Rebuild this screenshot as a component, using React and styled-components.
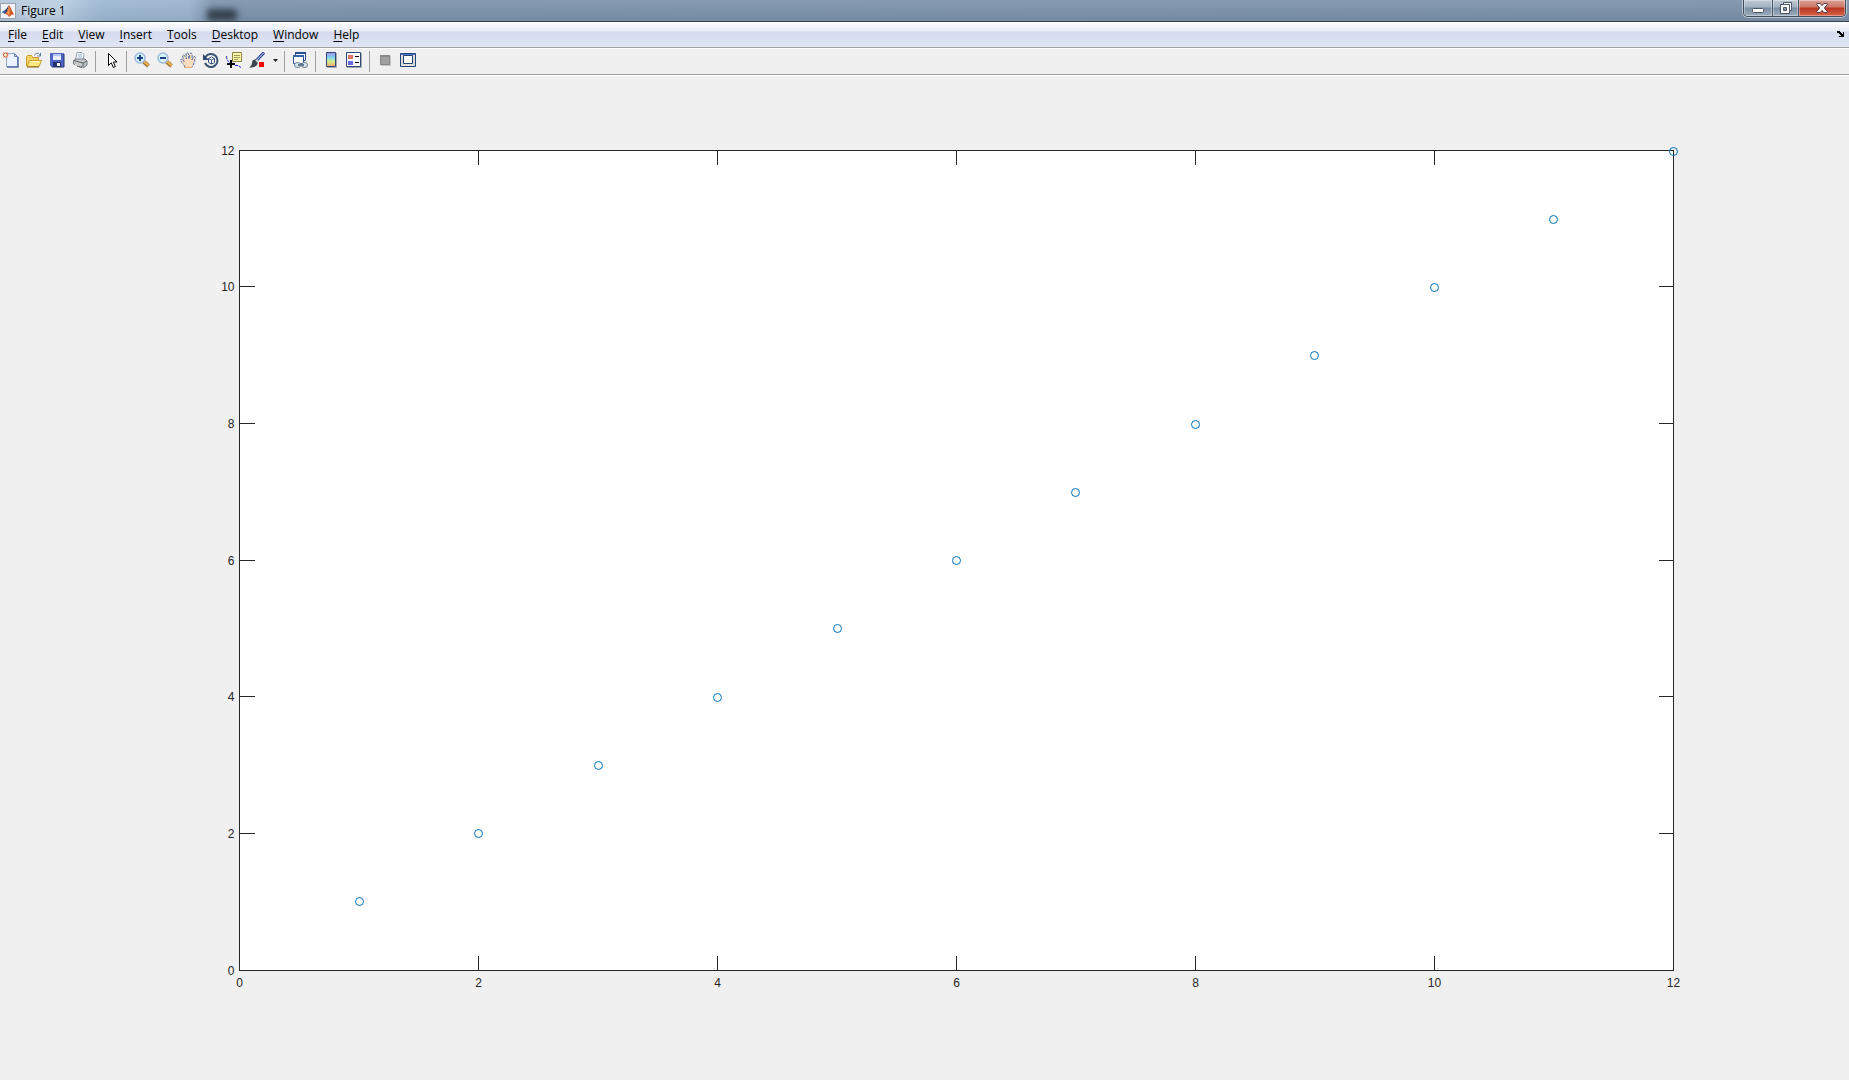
import React, { useLayoutEffect, useRef, useState } from "react";
import styled, { createGlobalStyle } from "styled-components";

const menus = ["File", "Edit", "View", "Insert", "Tools", "Desktop", "Window", "Help"];
const ticks = [0, 2, 4, 6, 8, 10, 12];
const points = [1, 2, 3, 4, 5, 6, 7, 8, 9, 10, 11, 12];
const MAX = 12;

export default function App(){
    return(
        <Page>
            <GlobalStyle />
            <TitleBar>
                <MatlabIcon />
                <Title>Figure 1</Title>
                <Smudge />
                <WindowControls />
            </TitleBar>
            <MenuBar>
                {menus.map(name => (
                    <MenuItem key={name}><u>{name[0]}</u>{name.substring(1)}</MenuItem>
                ))}
                <DockButton aria-label="Dock figure">
                    <svg width="8" height="7" viewBox="0 0 8 7" shapeRendering="crispEdges">
                        <path d="M0 0h3v1h1v1h1v1h1V1h1v5H2V5h2V4H3V3H2V2H0z" fill="#000" />
                    </svg>
                </DockButton>
            </MenuBar>
            <ToolBar>
                <Tool label="New Figure"><NewIcon /></Tool>
                <Tool label="Open File"><OpenIcon /></Tool>
                <Tool label="Save Figure"><SaveIcon /></Tool>
                <Tool label="Print Figure"><PrintIcon /></Tool>
                <Separator />
                <Tool label="Edit Plot"><PointerIcon /></Tool>
                <Separator />
                <Tool label="Zoom In"><ZoomIcon plus /></Tool>
                <Tool label="Zoom Out"><ZoomIcon /></Tool>
                <Tool label="Pan"><HandIcon /></Tool>
                <Tool label="Rotate 3D"><RotateIcon /></Tool>
                <Tool label="Data Cursor"><DataCursorIcon /></Tool>
                <Tool label="Brush"><BrushIcon /></Tool>
                <CaretButton aria-label="Brush colour">
                    <svg width="5" height="3" viewBox="0 0 5 3"><path d="M0 0h5L2.5 3z" fill="#222" /></svg>
                </CaretButton>
                <Separator />
                <Tool label="Link Plot"><LinkIcon /></Tool>
                <Separator />
                <Tool label="Insert Colorbar"><ColorbarIcon /></Tool>
                <Tool label="Insert Legend"><LegendIcon /></Tool>
                <Separator />
                <Tool label="Hide Plot Tools"><HideIcon /></Tool>
                <Tool label="Show Plot Tools"><ShowIcon /></Tool>
            </ToolBar>
            <Chart />
        </Page>
    );
}

function Tool(props){
    return(
        <ToolButton aria-label={props.label}>
            <Icon viewBox="0 0 16 16">{props.children}</Icon>
        </ToolButton>
    );
}

function Chart(){
    const ref = useRef(null);
    const [size, setSize] = useState({ width: 0, height: 0 });

    useLayoutEffect(() => {
        const measure = () => setSize({
            width: ref.current.clientWidth,
            height: ref.current.clientHeight
        });
        measure();
        window.addEventListener("resize", measure);
        return () => window.removeEventListener("resize", measure);
    }, []);

    // default axes position: 13% / 11% margins, 77.5% x 81.5% of the figure
    const left = Math.floor(size.width * 0.13) - 1;
    const top = Math.floor(size.height * 0.075);
    const w = Math.floor(size.width * 0.775) + 2;
    const h = Math.floor(size.height * 0.815) + 1;
    const x = v => Math.round(left + w * v / MAX) + 0.5;
    const y = v => Math.floor(top + h - h * v / MAX) + 0.5;
    // markers are placed inside the top left border
    const markerX = v => Math.floor(left + 1 + (w - 1) * v / MAX) + 0.5;
    const markerY = v => Math.floor(top + h - (h - 1) * v / MAX) + 0.5;
    const len = 15;

    return(
        <Figure ref={ref}>
            {size.width > 0 && (
                <Plot role="img" aria-label="Scatter plot">
                    <rect x={x(0)} y={y(MAX)} width={w} height={h} fill="#fff" stroke="#262626" />
                    {ticks.map(t => (
                        <g key={t}>
                            <Tick
                                d={`M${x(t)} ${y(0)}v${-len}M${x(t)} ${y(MAX)}v${len - 1}M${x(0)} ${y(t)}h${len}M${x(MAX)} ${y(t)}h${-len}`}
                            />
                            <Label x={x(t)} y={y(0) + 16} textAnchor="middle">{t}</Label>
                            <Label x={x(0) - 5} y={y(t) + 4} textAnchor="end">{t}</Label>
                        </g>
                    ))}
                    {points.map(p => (
                        <Marker key={p} cx={markerX(p)} cy={markerY(p)} r="4" />
                    ))}
                </Plot>
            )}
        </Figure>
    );
}

function WindowControls(){
    return(
        <Controls>
            <ControlButton $width="28px" aria-label="Minimize">
                <svg width="12" height="16" viewBox="0 0 12 16">
                    <rect x=".5" y="8.5" width="11" height="4" rx="1" fill="#fff" stroke="#4c5468" />
                </svg>
            </ControlButton>
            <ControlButton $width="26px" aria-label="Restore">
                <svg width="12" height="16" viewBox="0 0 12 16">
                    <path d="M3.5 2.5h8v8h-8z" fill="#fff" stroke="#4c5468" />
                    <path d="M.5 4.5h9v9h-9z" fill="#fff" stroke="#4c5468" />
                    <path d="M3.5 7.5h3v3h-3z" fill="#8595a8" stroke="#4c5468" />
                </svg>
            </ControlButton>
            <ControlButton $width="47px" $close aria-label="Close">
                <svg width="12" height="16" viewBox="0 0 12 16">
                    <path d="M.8 3.5h3.4L6 5.7l1.8-2.2h3.4v1.200L8.3 8l2.9 3.3v1.2H7.8L6 10.3l-1.8 2.2H.8v-1.200L3.7 8 .8 4.7z" fill="#fff" stroke="#54404a" />
                </svg>
            </ControlButton>
        </Controls>
    );
}

function MatlabIcon(){
    return(
        <svg width="16" height="16" viewBox="0 0 16 16">
            <rect x=".5" y=".5" width="15" height="15" fill="#f2f4f7" stroke="#9aa3ad" />
            <path d="M1.5 9l3.5-2 2 1-2.5 3z" fill="#4a78b8" />
            <path d="M5 7c2-1 2.5-3.5 4-5l-2 7-2.5 2z" fill="#28456e" />
            <path d="M9 2c1.5 1.5 3 7 5.5 9.5-2-1-3 .5-5.5 2.5-1-2-2-3-4-3 2.5-2 3-6 4-9z" fill="#d6532a" />
            <path d="M9 3c1 3 .5 7 .5 10-.8-1.500-1.500-2.500-3-3C8.500 8 8.600 5 9 3z" fill="#f0a050" />
        </svg>
    );
}

const NewIcon = () => (
    <>
        <path d="M3.5 1.5h8l3 3v10h-11z" fill="#eaf2fd" stroke="#8fa6d0" />
        <path d="M11.5 1.5v3h3z" fill="#b9cdf0" stroke="#6681b5" />
        <path d="M15 5v10H4" fill="none" stroke="#4f6ca5" strokeWidth="1.5" />
        <path d="M0 0l5 6M5 0L0 6M0 3h6" stroke="#f1b08c" />
        <circle cx="2.5" cy="3" r="2" fill="#fff0d8" stroke="#d4552c" />
    </>
);

const OpenIcon = () => (
    <>
        <path d="M8.5 3.5c1-3 4-3 5.500-.5M14.5 1v3h-3" fill="none" stroke="#657c9c" />
        <path d="M.5 14V4.5l1-1h4l1 2h6v3" fill="#f4d263" stroke="#c99a2d" />
        <path d="M1 14.5L3.5 8.5h12l-2.500 6z" fill="#fce97d" stroke="#c99a2d" />
        <path d="M4 9.5h10" stroke="#fffad0" />
        <path d="M1 15h12" stroke="#8b671b" />
    </>
);

const SaveIcon = () => (
    <>
        <path d="M1.5 1.5h13v13h-12l-1-1z" fill="#4e62c8" stroke="#5366bb" />
        <path d="M15 2v13H3" fill="none" stroke="#27306e" />
        <path d="M4 2h8v6H4z" fill="#e6efff" />
        <path d="M4 2h8v2H4z" fill="#b1c8f4" />
        <path d="M4 10h8v5H4z" fill="#26306f" />
        <path d="M8 11h3v3H8z" fill="#fff" />
    </>
);

const PrintIcon = () => (
    <>
        <path d="M3.5 8l1.500-7.500h5l2 2-1 6z" fill="#f7fbff" stroke="#91a2b8" />
        <path d="M6 3h4M6 5h4" stroke="#9db2cc" />
        <path d="M1.5 8.5L4 7h9l2 2v4l-3 2.500L1.5 12z" fill="#c4c7ca" stroke="#777c83" />
        <path d="M1.5 8.5L11 11l4-2M11 11v4" fill="none" stroke="#62676e" />
        <path d="M3 12.5l6 2" stroke="#f4f4f4" />
        <path d="M5 14l5 1.5" stroke="#4f545a" />
        <path d="M12 12h1" stroke="#4eb045" />
    </>
);

const PointerIcon = () => (
    <path d="M5.5 1.5v12l2.800-2.700 2 4.700 2-1-2-4.500h3.700z" fill="#fff" stroke="#000" />
);

const ZoomIcon = props => (
    <>
        <path d="M9.5 9.5l5 4.500" stroke="#9a713e" strokeWidth="4" />
        <path d="M9.5 9l5 4.500" stroke="#f3b34b" strokeWidth="2" />
        <circle cx="6" cy="6" r="5" fill="#d6f3fc" stroke="#9db9dc" strokeWidth="1.5" />
        <path d={props.plus ? "M3 6h6M6 3v6" : "M3 6h6"} stroke="#193f7d" strokeWidth="2" />
    </>
);

const handOutline = "M5 15c-.5-2-4-4.5-4.5-7C1 6.5 2.5 7.5 4 9.5L2.5 4c.5-1.8 2-1.2 2.5.5L6.5 7 6 2c.5-1.8 2-1.5 2.5 0L9 7l1-5c.7-1.6 2.4-1 2.2.8L12 8l1.5-3c1-1.2 2.2-.3 1.8 1C14.5 9 14 12 12 15";

const HandIcon = () => (
    <>
        <path d={handOutline} fill="#fbdcbd" stroke="#4d6da6" strokeDasharray="3 1" />
        <path d="M4 15.5h8" stroke="#e0b48a" />
    </>
);

const RotateIcon = () => (
    <>
        <path d="M2.5 5A6.5 6.5 0 1 1 2 11" fill="none" stroke="#3a5278" strokeWidth="2" />
        <path d="M0 2v6h6z" fill="#2f4870" />
        <path d="M5.5 6.5l3-1.5 3 1.5v4l-3 1.5-3-1.5z" fill="#fff" stroke="#3a5680" />
        <path d="M5.5 6.5l3 1.5 3-1.5M8.5 8v4" fill="none" stroke="#3a5680" />
    </>
);

const DataCursorIcon = () => (
    <>
        <path d="M6.5.5h9v9h-9z" fill="#fbf7a9" stroke="#8b8446" />
        <path d="M8 3.5h6M8 5.5h6M8 7.5h4" stroke="#9e9859" />
        <path d="M.5 4c0 4 2 6 4 7M9 13.5h3l3 2" fill="none" stroke="#2323ed" strokeDasharray="3 1" />
        <path d="M1 12h8M5 8v8" stroke="#000" strokeWidth="2" />
    </>
);

const BrushIcon = () => (
    <>
        <path d="M7 9l8-8.5" stroke="#344a97" strokeWidth="3" />
        <path d="M8 8l6.5-7" stroke="#bacdf5" />
        <path d="M7.5 7.5C4 7 3 9 3 11c0 1.5-1 3-3 4.5 5 0 9-1 9-6z" fill="#3e444b" />
        <path d="M7 8l2 2" stroke="#c9ccd0" strokeWidth="2" />
        <path d="M10 10h5v5h-5z" fill="#f00" />
    </>
);

const LinkIcon = () => (
    <>
        <path d="M3.5.5h10v8h-10z" fill="#fff" stroke="#2c4f8f" />
        <path d="M3 1h11" stroke="#2c4f8f" strokeWidth="2" />
        <path d="M1.5 3.5h10v8h-10z" fill="#fff" stroke="#2c4f8f" />
        <path d="M1 4h11" stroke="#3762a9" strokeWidth="2" />
        <g fill="#d8e5ea" stroke="#6c8394">
            <rect x="2.5" y="10.5" width="6" height="5" rx="2.5" />
            <rect x="9.5" y="10.5" width="6" height="5" rx="2.5" />
        </g>
        <path d="M6 13h6" stroke="#60788a" strokeWidth="2" />
    </>
);

const ColorbarIcon = () => (
    <>
        <defs>
            <linearGradient id="bar" x2="0" y2="1">
                <stop stopColor="#aa91e7" />
                <stop offset=".35" stopColor="#79d5f2" />
                <stop offset=".65" stopColor="#d8ed8b" />
                <stop offset="1" stopColor="#f5a16f" />
            </linearGradient>
        </defs>
        <path d="M4 15.5h9.5V1" fill="none" stroke="#a7a9ae" />
        <path d="M3.5.5h9v14h-9z" fill="url(#bar)" stroke="#2d4878" />
    </>
);

const LegendIcon = () => (
    <>
        <path d="M1 15.5h14.5V1" fill="none" stroke="#a7a9ae" />
        <path d="M.5.5h14v14H.5z" fill="#fff" stroke="#2d4878" />
        <path d="M2 3h5v4H2z" fill="#df7169" />
        <path d="M2 9h5v4H2z" fill="#6b67dc" />
        <path d="M9 4.5h4M9 10.5h4" stroke="#000" />
    </>
);

const HideIcon = () => (
    <>
        <path d="M3 3h10v10H3z" fill="#888" />
        <path d="M4 5h8v7H4z" fill="#a0a0a0" />
        <path d="M4 13.5h9.5V4" fill="none" stroke="#c5c5c5" />
    </>
);

const ShowIcon = () => (
    <>
        <path d="M.5 1.5h15v13H.5z" fill="#d9d9d4" stroke="#24467f" />
        <path d="M1 2.5h14" stroke="#4a78c4" />
        <path d="M3.5 3.5h9v8h-9z" fill="#fff" stroke="#24467f" />
        <path d="M2 13h12" stroke="#fff" strokeDasharray="1 1" />
    </>
);

const GlobalStyle = createGlobalStyle`
    body{
        margin: 0;
        background: #f0f0f0;
        font-family: "Open Sans", "Noto Sans", sans-serif;
        font-size: 12px;
        color: #000;
    }

    button{
        font: inherit;
        color: inherit;
        background: none;
        border: 0;
        padding: 0;
    }
`;

const Page = styled.div`
    min-height: 100vh;
    display: flex;
    flex-direction: column;
`;

const TitleBar = styled.header`
    height: 21px;
    display: flex;
    align-items: center;
    gap: 5px;
    background: linear-gradient(rgba(255,255,255,0.08), rgba(0,0,0,0.06)),
        linear-gradient(90deg, #b4c8dc 0, #b9cee2 60px, #9db9d3 100px, #9ab4ce 190px, #7d94ad 212px, #7b92aa 100%);
    border-bottom: 1px solid #39424f;
    overflow: hidden;
`;

const Title = styled.h1`
    margin: 0;
    font-size: 12px;
    font-weight: 400;
    line-height: 20px;
    text-shadow: 0 0 8px #fff;
`;

/* dark shape of the desktop showing through the glass */
const Smudge = styled.span`
    width: 30px;
    height: 12px;
    margin-left: 136px;
    margin-top: 8px;
    border-radius: 4px;
    background: #35424f;
    filter: blur(3px);
`;

const Controls = styled.div`
    display: flex;
    align-self: flex-start;
    margin-left: auto;
    margin-right: 3px;
    border: 1px solid #3f4b5a;
    border-top: 0;
    border-radius: 0 0 5px 5px;
    box-shadow: 0 0 0 1px rgba(255,255,255,0.5);
    overflow: hidden;
`;

const ControlButton = styled.button`
    width: ${props => props.$width};
    height: 16px;
    display: flex;
    justify-content: center;
    background: ${props => props.$close
        ? "linear-gradient(#dba197 0, #cc7668 7px, #b93520 8px, #d8644a 16px)"
        : "linear-gradient(#bdc8d4 0, #a3b1c1 7px, #7b8da1 8px, #9cadbe 16px)"};
    box-shadow: inset 0 0 0 1px rgba(255,255,255,0.35);

    & + &{
        border-left: 1px solid #4b586a;
    }
`;

const MenuBar = styled.nav`
    height: 25px;
    padding-left: 1px;
    display: flex;
    align-items: center;
    gap: 1px;
    background: linear-gradient(#fff 0, #e6ebf6 9px, #d5dbed 10px, #e1e6f6 25px);
    border-bottom: 1px solid #a0a0a0;
`;

const MenuItem = styled.button`
    padding: 0 7px;
    line-height: 20px;

    u{
        text-underline-offset: 2px;
    }
`;

const DockButton = styled.button`
    display: flex;
    margin-left: auto;
    margin-right: 4px;
`;

const ToolBar = styled.div`
    height: 25px;
    display: flex;
    align-items: flex-start;
    border-top: 1px solid #fff;
    border-bottom: 1px solid #a0a0a0;
`;

const ToolButton = styled.button`
    height: 22px;
    display: flex;
    align-items: center;
    padding: 0 4px 0 3px;
`;

const CaretButton = styled(ToolButton)`
    padding: 0 3px 0 4px;
`;

const Icon = styled.svg`
    width: 16px;
    height: 16px;
`;

const Separator = styled.span`
    width: 1px;
    height: 21px;
    margin: 0 4px 0 3px;
    align-self: center;
    background: #a0a0a0;
`;

const Figure = styled.main`
    flex: 1;
    display: grid;
    box-shadow: inset 0 1px #fff;
`;

const Plot = styled.svg`
    width: 100%;
    height: 100%;
`;

const Tick = styled.path`
    stroke: #262626;
    shape-rendering: crispEdges;
`;

const Marker = styled.circle`
    fill: none;
    stroke: #0072bd;
`;

const Label = styled.text`
    font-family: "Liberation Sans", Arial, sans-serif;
    font-size: 12px;
    fill: #262626;
`;
